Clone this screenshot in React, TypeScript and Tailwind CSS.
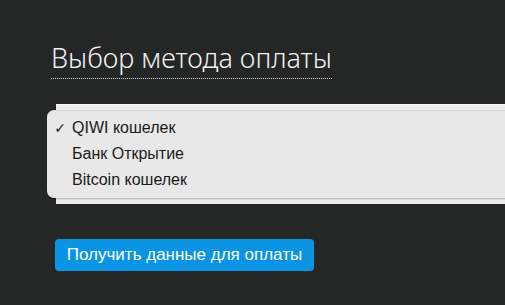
import { FC } from 'react';

const options = ['QIWI кошелек', 'Банк Открытие', 'Bitcoin кошелек'];

const App: FC = () => {
    return (
        <div className="w-[505px] h-[305px] bg-[#252626] overflow-hidden flex flex-col" style={{ fontFamily: '"Liberation Sans", Arial, sans-serif' }}>
            <div className="pl-[51px] pt-[41px]">
                <h1 className="inline-block text-[27px] leading-[34px] font-light text-[#f2f2f2] border-b border-dotted border-[#dcdcdc] pb-[3px]"
                    style={{ fontFamily: '"Noto Sans", sans-serif' }}>
                    Выбор метода оплаты
                </h1>
            </div>

            <div className="relative ml-[56px] mt-[25px] h-[100px] bg-[#ededed] border-t border-[#f7f7f7]">
                <div className="absolute left-[-9px] top-[5px] w-[470px] h-[88px] bg-[#e8e8e8] rounded-l-[7px] border-t border-[#d6d6d6] shadow-[0_1px_2px_rgba(0,0,0,0.25)] pt-[4px] flex flex-col">
                    {options.map((item, key) => {
                        return <div key={item + key} className="h-[26px] flex items-center text-[16px] text-[#1a1a1a]">
                            <span className="w-[25px] shrink-0 pr-[6px] text-right text-[14px] font-bold" style={{ fontFamily: '"DejaVu Sans", sans-serif' }}>{key === 0 ? '✓' : ''}</span>
                            {item}
                        </div>
                    })}
                </div>
            </div>

            <div className="pl-[55px] pt-[35px]">
                <button className="h-[32px] w-[259px] rounded-[4px] bg-[#0b94e4] text-white text-[17px] flex items-center justify-center">
                    Получить данные для оплаты
                </button>
            </div>
        </div>
    );
};

export default App;
